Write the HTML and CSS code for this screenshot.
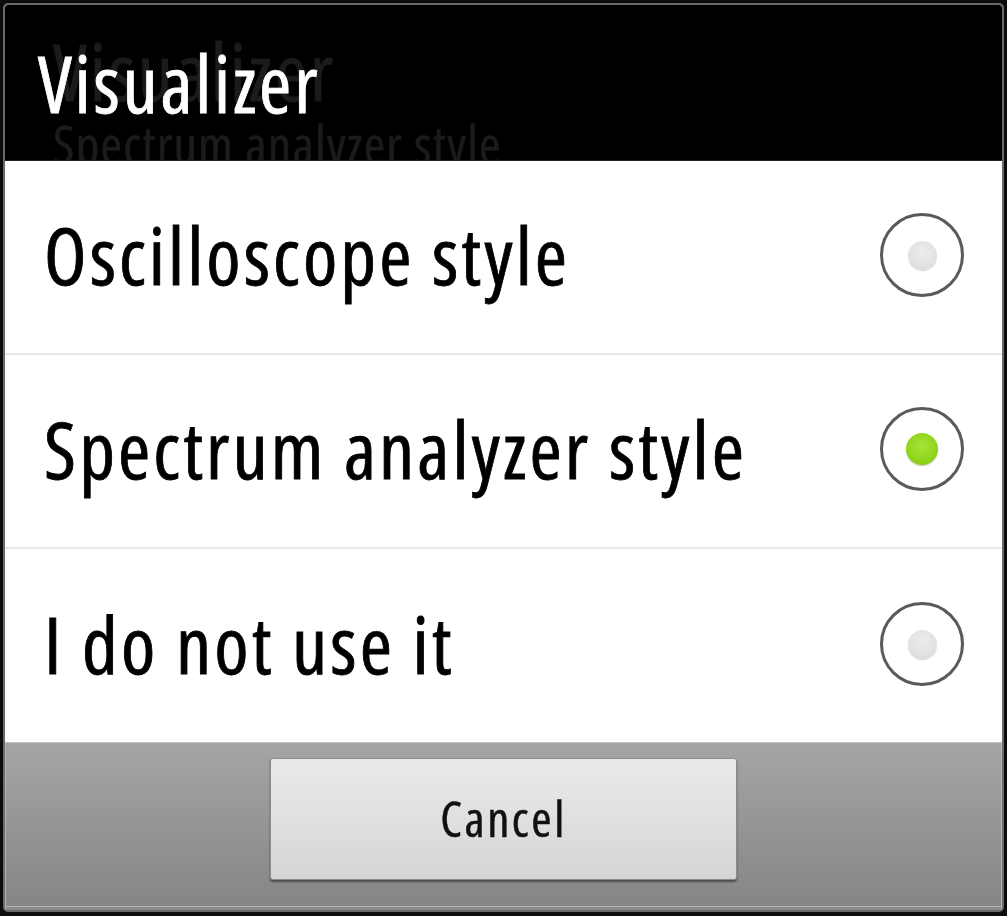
FILE: index.html
```html
<!DOCTYPE html>
<html lang="en">
<head>
<meta charset="utf-8">
<title>Visualizer</title>
<link rel="stylesheet" href="styles.css">
</head>
<body>
<div class="frame">
  <div class="dialog">
    <header class="title-bar">
      <span class="ghost ghost-title" aria-hidden="true">Visualizer</span>
      <span class="ghost ghost-sub" aria-hidden="true">Spectrum analyzer style</span>
      <h1 class="title">Visualizer</h1>
    </header>
    <ul class="options">
      <li class="option"><span class="label">Oscilloscope style</span><span class="radio"><span class="dot"></span></span></li>
      <li class="option"><span class="label">Spectrum analyzer style</span><span class="radio checked"><span class="dot"></span></span></li>
      <li class="option last"><span class="label">I do not use it</span><span class="radio"><span class="dot"></span></span></li>
    </ul>
    <footer class="button-bar">
      <button class="btn" type="button">Cancel</button>
    </footer>
  </div>
</div>
</body>
</html>
```

FILE: styles.css
```css
html, body {
  margin: 0;
  padding: 0;
  background: #0c0c0c;
}

body {
  font-family: "Open Sans", "Noto Sans", "DejaVu Sans", sans-serif;
  font-stretch: 75%;
}

.frame {
  box-sizing: border-box;
  width: 1007px;
  height: 916px;
  padding: 3px 3px 4px 3px;
}

.dialog {
  box-sizing: border-box;
  height: 100%;
  border: 2px solid #6a6a6a;
  border-radius: 5px;
  overflow: hidden;
  display: flex;
  flex-direction: column;
  background: #ffffff;
}

.title-bar {
  position: relative;
  box-sizing: border-box;
  height: 156px;
  flex: none;
  background: #000000;
  border-bottom: 1px solid #202020;
  overflow: hidden;
  padding: 39px 0 0 33px;
}

.title {
  position: relative;
  margin: 0;
  font-size: 78px;
  line-height: 1;
  font-weight: 400;
  letter-spacing: 2.8px;
  -webkit-text-stroke: 0.8px #ffffff;
  color: #ffffff;
}

.ghost {
  position: absolute;
  color: #1b1b1b;
  line-height: 1;
  white-space: nowrap;
}

.ghost-title {
  left: 48px;
  top: 27px;
  font-size: 78px;
  letter-spacing: 2.9px;
  -webkit-text-stroke: 0.8px #1b1b1b;
}

.ghost-sub {
  left: 48px;
  top: 113px;
  font-size: 52px;
  letter-spacing: 1.2px;
  -webkit-text-stroke: 0.5px #1b1b1b;
}

.options {
  list-style: none;
  margin: 0;
  padding: 0;
  flex: none;
}

.option {
  box-sizing: border-box;
  height: 194px;
  display: flex;
  align-items: center;
  justify-content: space-between;
  padding: 0 38px 4px 39px;
  border-bottom: 2px solid #e8e8e8;
  background: #ffffff;
}

.option.last {
  height: 193px;
  border-bottom: none;
  padding-bottom: 3px;
}

.label {
  font-size: 78px;
  line-height: 1;
  font-weight: 400;
  letter-spacing: 3.1px;
  -webkit-text-stroke: 0.8px #000000;
  color: #000000;
  white-space: nowrap;
}

.radio {
  box-sizing: border-box;
  width: 84px;
  height: 84px;
  border-radius: 50%;
  border: 3px solid #5a5a5a;
  background: #ffffff;
  display: flex;
  align-items: center;
  justify-content: center;
  flex: none;
}

.dot {
  box-sizing: border-box;
  width: 29px;
  height: 29px;
  border-radius: 50%;
  background: radial-gradient(circle at 50% 40%, #ececec 0%, #e2e2e2 60%, #d2d2d2 100%);
  box-shadow: 0 1px 1px rgba(0, 0, 0, 0.18);
}

.radio.checked .dot {
  width: 32px;
  height: 32px;
  background: radial-gradient(circle at 50% 40%, #a6e33a 0%, #92d61c 55%, #7fc30c 100%);
  box-shadow: 0 1px 1px rgba(0, 0, 0, 0.25);
}

.button-bar {
  flex: 1;
  display: flex;
  justify-content: center;
  align-items: flex-start;
  padding-top: 15px;
  background: linear-gradient(#a5a5a5, #858585);
  border-top: 1px solid #c2c2c2;
  box-shadow: inset 1px 0 0 #b4b4b4, inset -1px 0 0 #b4b4b4, inset 0 -3px 0 #8a8a8a, inset 0 -4px 0 #b6b6b6;
}

.btn {
  box-sizing: border-box;
  width: 467px;
  height: 122px;
  border: 1px solid #8c8c8c;
  border-radius: 3px;
  background: linear-gradient(#eaeaea, #d5d5d5);
  box-shadow: 0 2px 2px rgba(0, 0, 0, 0.45);
  font-family: inherit;
  font-stretch: 75%;
  font-size: 49px;
  font-weight: 400;
  letter-spacing: 2.6px;
  -webkit-text-stroke: 0.5px #111111;
  line-height: 1;
  color: #111111;
  padding: 0 0 2px 0;
}
```
